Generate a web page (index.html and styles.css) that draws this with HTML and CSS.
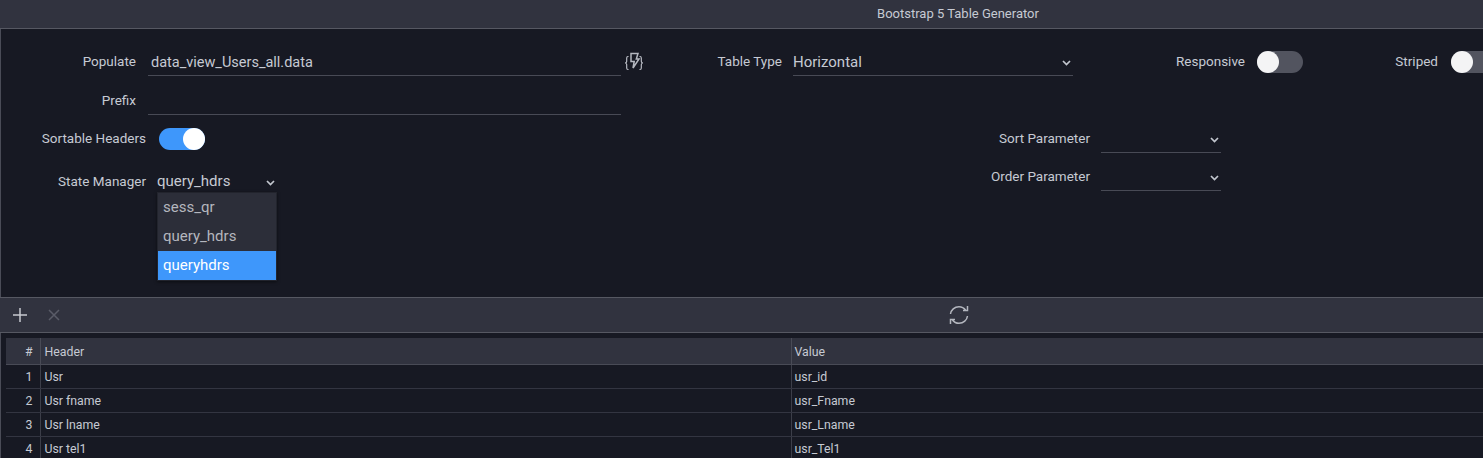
FILE: index.html
```html
<!DOCTYPE html>
<html lang="en">
<head>
<meta charset="utf-8">
<title>Bootstrap 5 Table Generator</title>
<link rel="stylesheet" href="styles.css">
</head>
<body>
<header class="titlebar"><span class="title">Bootstrap 5 Table Generator</span></header>
<section class="panel">
  <div class="row row-top">
    <label class="label label-populate">Populate</label>
    <div class="input input-wide"><span class="value value-populate">data_view_Users_all.data</span></div>
    <svg class="bolt" width="20" height="20" viewBox="0 0 20 20" fill="none" stroke="#c3c6ce" stroke-width="1.100"><path d="M4.500 5.500H4C3 5.500 2.700 6 2.700 7V10.500C2.700 11.300 2.300 11.800 1.200 12C2.300 12.200 2.700 12.700 2.700 13.500V17C2.700 18 3 18.500 4 18.500H4.500"/><path d="M15.500 5.500H16C17 5.500 17.300 6 17.300 7V10.500C17.300 11.300 17.700 11.800 18.800 12C17.700 12.200 17.300 12.700 17.300 13.500V17C17.300 18 17 18.500 16 18.500H15.500"/><path d="M7 2.500H14L12.300 8H15L9 17L10.200 10.500H7Z" stroke-width="1.500" stroke="#b4b7bf"/></svg>
    <label class="label label-type">Table Type</label>
    <div class="input input-type"><span class="value">Horizontal</span><svg class="chev" width="9" height="6" viewBox="0 0 9 6"><path d="M1 1l3.500 3.500L8 1" fill="none" stroke="#c3c7cf" stroke-width="1.700"/></svg></div>
    <label class="label label-resp">Responsive</label>
    <span class="toggle"><span class="knob"></span></span>
    <label class="label label-striped">Striped</label>
    <span class="toggle"><span class="knob"></span></span>
  </div>
  <div class="row row-prefix">
    <label class="label label-populate">Prefix</label>
    <div class="input input-wide"></div>
  </div>
  <div class="lower">
    <div class="lower-left">
      <div class="row row-sort">
        <label class="label label-left">Sortable Headers</label>
        <span class="toggle toggle-on"><span class="knob"></span></span>
      </div>
      <div class="row row-state">
        <label class="label label-left">State Manager</label>
        <div class="state">
          <div class="state-select"><span class="value">query_hdrs</span><svg class="chev" width="9" height="6" viewBox="0 0 9 6"><path d="M1 1l3.500 3.500L8 1" fill="none" stroke="#c3c7cf" stroke-width="1.700"/></svg></div>
          <ul class="menu">
            <li class="menu-item">sess_qr</li>
            <li class="menu-item">query_hdrs</li>
            <li class="menu-item menu-active">queryhdrs</li>
          </ul>
        </div>
      </div>
    </div>
    <div class="lower-right">
      <div class="row">
        <label class="label label-param">Sort Parameter</label>
        <div class="input input-param"><svg class="chev" width="9" height="6" viewBox="0 0 9 6"><path d="M1 1l3.500 3.500L8 1" fill="none" stroke="#c3c7cf" stroke-width="1.700"/></svg></div>
      </div>
      <div class="row row-order">
        <label class="label label-param">Order Parameter</label>
        <div class="input input-param"><svg class="chev" width="9" height="6" viewBox="0 0 9 6"><path d="M1 1l3.500 3.500L8 1" fill="none" stroke="#c3c7cf" stroke-width="1.700"/></svg></div>
      </div>
    </div>
  </div>
</section>
<div class="toolbar">
  <svg class="tool-plus" width="16" height="16" viewBox="0 0 16 16" stroke="#c6c9d0" stroke-width="1.500"><path d="M8 1v14M1 8h14"/></svg>
  <svg class="tool-x" width="14" height="14" viewBox="0 0 14 14" stroke="#5a5c68" stroke-width="1.500"><path d="M2 2l10 10M12 2L2 12"/></svg>
  <svg class="tool-refresh" width="20" height="20" viewBox="0 0 20 20" fill="none" stroke="#b4b7bf" stroke-width="1.500"><path d="M1.500 9C2 5 5.500 1.700 10 1.700c2.800 0 5 1.200 6.500 3.300M18.500 1v4.500H14"/><path d="M18.500 11c-.5 4-4 7.300-8.500 7.300-2.800 0-5-1.200-6.500-3.300M1.500 19v-4.500H6"/></svg>
</div>
<section class="grid-wrap">
  <table class="grid">
    <colgroup><col class="col-num"><col class="col-head"><col></colgroup>
    <thead>
      <tr><th class="num">#</th><th>Header</th><th>Value</th></tr>
    </thead>
    <tbody>
      <tr><td class="num">1</td><td>Usr</td><td>usr_id</td></tr>
      <tr><td class="num">2</td><td>Usr fname</td><td>usr_Fname</td></tr>
      <tr><td class="num">3</td><td>Usr lname</td><td>usr_Lname</td></tr>
      <tr><td class="num">4</td><td>Usr tel1</td><td>usr_Tel1</td></tr>
    </tbody>
  </table>
</section>
</body>
</html>
```
FILE: styles.css
```css
* { box-sizing: border-box; }
html, body { margin: 0; height: 458px; overflow: hidden; }
body {
  background: #171923;
  color: #c6cad3;
  font-family: Roboto, "Liberation Sans", sans-serif;
  font-size: 13.500px;
  width: 1483px;
}
.titlebar {
  height: 29px;
  background: #31333f;
  border-bottom: 1px solid #565862;
  display: flex;
  justify-content: center;
  align-items: center;
  padding-left: 433px;
  padding-bottom: 2px;
  font-size: 13px;
}
.panel {
  height: 268px;
  border-left: 1px solid #4a4c57;
  padding-top: 17px;
  overflow: hidden;
}
.row { display: flex; align-items: center; white-space: nowrap; }
.row-top { height: 30px; }
.row-prefix { height: 30px; margin-top: 9px; }
.label { display: block; text-align: right; flex: none; }
.label-populate { width: 135px; margin-right: 12px; }
.label-type { width: 120px; margin-left: 18px; margin-right: 11px; }
.label-resp { width: 110px; margin-left: 62px; margin-right: 12px; }
.label-striped { width: 100px; margin-left: 35px; margin-right: 13px; }
.input {
  height: 30px;
  border-bottom: 1px solid #484a55;
  display: flex;
  align-items: center;
  justify-content: space-between;
  flex: none;
}
.input-wide { width: 473px; padding-left: 3px; }
.input-type { width: 280px; }
.value { font-size: 15px; padding-top: 2px; }
.value-populate { font-size: 14.500px; padding-top: 3px; }
.bolt { margin-left: 3px; flex: none; }
.chev { flex: none; margin-right: 2px; margin-top: 5px; }
.toggle {
  width: 46px;
  height: 22px;
  border-radius: 11px;
  background: #52545f;
  flex: none;
  display: flex;
  align-items: center;
  margin-top: 2px;
}
.knob { width: 22px; height: 22px; border-radius: 50%; background: #f4f4f5; }
.toggle-on { background: #3e97fb; justify-content: flex-end; margin-top: 2px; }
.toggle-on .knob { background: #fff; }
.lower { display: flex; margin-top: 8px; }
.lower-left { width: 969px; }
.row-sort { height: 30px; }
.label-left { width: 145px; margin-right: 13px; }
.row-state { margin-top: 13px; align-items: flex-start; }
.row-state .label-left { margin-right: 11px; padding-top: 7px; }
.state { position: relative; width: 120px; }
.state-select { height: 30px; display: flex; align-items: center; justify-content: space-between; }
.state-select .value { padding-top: 0; }
.state-select .chev { margin-top: 4px; }
.menu {
  position: absolute;
  left: 0;
  top: 26px;
  width: 120px;
  height: 89px;
  margin: 0;
  padding: 0;
  list-style: none;
  background: #2c2e39;
  border: 1px solid #22242d;
  box-shadow: 0 1px 3px rgba(0,0,0,.5);
  font-size: 15px;
  color: #b4b6be;
}
.menu-item { height: 29px; padding: 0 0 2px 5px; display: flex; align-items: center; }
.menu-active { background: #3e97fb; color: #fff; }
.label-param { width: 120px; margin-right: 11px; }
.input-param { width: 120px; justify-content: flex-end; }
.row-order { margin-top: 8px; }
.toolbar {
  height: 36px;
  background: #31333f;
  border-top: 1px solid #565862;
  border-bottom: 1px solid #565862;
  display: flex;
  align-items: center;
}
.tool-plus { margin-left: 12px; flex: none; }
.tool-x { margin-left: 19px; flex: none; }
.tool-refresh { margin-left: 888px; flex: none; }
.grid-wrap {
  height: 125px;
  border-left: 1px solid #4a4c57;
  padding: 5px 0 0 5px;
}
.grid {
  width: 1477px;
  border-collapse: collapse;
  table-layout: fixed;
  font-size: 12.300px;
}
.col-num { width: 34px; }
.col-head { width: 751px; }
.grid th {
  height: 26px;
  background: #31333f;
  text-align: left;
  font-weight: 400;
  padding: 2px 3px 0 4px;
  border-right: 1px solid #494b56;
  border-bottom: 1px solid #494b56;
}
.grid td {
  height: 24px;
  padding: 2px 3px 0 4px;
  border-right: 1px solid #3c3e49;
  border-bottom: 1px solid #333541;
}
.grid th:last-child, .grid td:last-child { border-right: 0; padding-left: 3px; }
.grid .num { text-align: right; padding-right: 7px; }
```
